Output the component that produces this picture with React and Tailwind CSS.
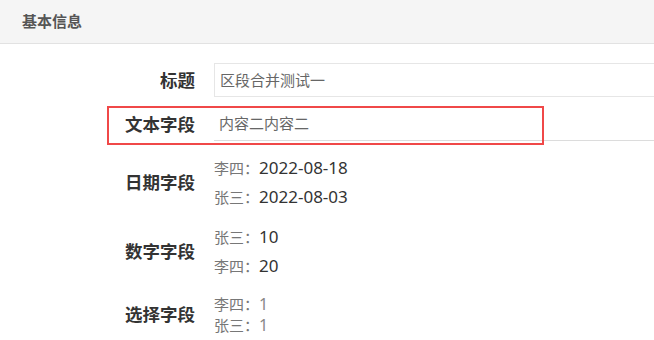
const FONT = "font-['Noto_Sans','Noto_Sans_CJK_SC',sans-serif]";

function Label({ children }) {
  return (
    <div className="w-[195px] shrink-0 text-right text-[17.5px] font-bold text-[#333]">{children}</div>
  );
}

function Pairs({ items, tight }) {
  return (
    <div className={`flex flex-col ${tight ? "leading-[20.5px]" : "gap-[7px] leading-[22px]"}`}>
      {items.map(([name, val]) => (
        <div key={name} className={tight ? "text-[16px] text-[#888]" : "text-[17px] text-[#333]"}>
          <span className="text-[15px] text-[#777]">{name}：</span>
          {val}
        </div>
      ))}
    </div>
  );
}

export default function App() {
  return (
    <div className={`${FONT} h-[340px] w-[654px] overflow-hidden bg-white`}>
      <div className="flex h-[44px] items-center border-b border-[#e2e2e2] bg-[#f5f5f5] pl-[22px] text-[15px] font-bold text-[#555]">
        基本信息
      </div>

      <div className="flex flex-col">
        <div className="mt-[19px] flex items-center gap-[19px]">
          <Label>标题</Label>
          <div className="-mr-4 flex h-[34px] flex-1 items-center border border-[#e6e6e6] pl-[5px] text-[15px] text-[#666]">
            区段合并测试一
          </div>
        </div>

        <div className="relative mt-[10px] flex items-center gap-[19px]">
          <Label>文本字段</Label>
          <div className="-mr-4 flex h-[34px] flex-1 items-center border-b border-[#dcdcdc] pl-[5px] text-[15px] text-[#666]">
            内容二内容二
          </div>
          <span className="pointer-events-none absolute left-[107px] top-[-1px] h-[39px] w-[437px] border-2 border-[#f04848]" />
        </div>

        <div className="mt-[16px] flex items-center gap-[19px]">
          <Label>日期字段</Label>
          <Pairs items={[["李四", "2022-08-18"], ["张三", "2022-08-03"]]} />
        </div>

        <div className="mt-[18px] flex items-center gap-[19px]">
          <Label>数字字段</Label>
          <Pairs items={[["张三", "10"], ["李四", "20"]]} />
        </div>

        <div className="mt-[17px] flex items-center gap-[19px]">
          <Label>选择字段</Label>
          <Pairs tight items={[["李四", "1"], ["张三", "1"]]} />
        </div>
      </div>
    </div>
  );
}
